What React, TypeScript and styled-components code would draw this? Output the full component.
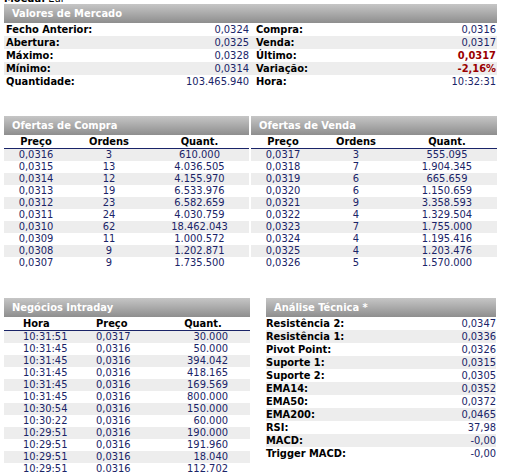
import React from 'react';
import styled, { createGlobalStyle } from 'styled-components';

const Global = createGlobalStyle`
  html, body { margin: 0; padding: 0; background: #fff; }
  body {
    font-family: "DejaVu Sans", Verdana, sans-serif;
    font-stretch: condensed;
    font-size: 11px;
    color: #000;
    overflow: hidden;
  }
`;

const NAVY = '#1a2468';
const ROWGRAY = '#ededed';

const Page = styled.div`
  width: 493px;
  margin: -7px 0 0 4px;
  display: flex;
  flex-direction: column;
`;

const Caption = styled.div`
  height: 12px;
  line-height: 12px;
  white-space: nowrap;
  b { font-weight: bold; }
`;

const Bar = styled.div<{ $mt?: number }>`
  height: 19px;
  line-height: 19px;
  margin-top: ${p => p.$mt ?? 0}px;
  padding-left: 8px;
  color: #fff;
  font-weight: bold;
  white-space: nowrap;
  background: linear-gradient(#c6c6c6, #8e8e8e);
`;

const KVGrid = styled.div`
  display: flex;
  flex-direction: column;
`;

const KVRow = styled.div<{ $alt: boolean }>`
  display: grid;
  grid-template-columns: 246px 247px;
  height: 13px;
  line-height: 13px;
  background: ${p => (p.$alt ? ROWGRAY : '#fff')};
`;

const KVHalf = styled.div<{ $pl: number }>`
  display: flex;
  justify-content: space-between;
  padding: 0 1px 0 ${p => p.$pl}px;
  white-space: nowrap;
`;

const Label = styled.span`
  font-weight: bold;
`;

const Value = styled.span<{ $red?: boolean }>`
  color: ${p => (p.$red ? '#9a0000' : NAVY)};
  font-weight: ${p => (p.$red ? 'bold' : 'normal')};
`;

const Pair = styled.div`
  display: grid;
  grid-template-columns: 245px 246px;
  column-gap: 2px;
  margin-top: 28px;
`;

const Panel = styled.div`
  display: flex;
  flex-direction: column;
`;

const OfferRow = styled.div<{ $head?: boolean; $alt?: boolean }>`
  display: grid;
  grid-template-columns: 64px 82px 1fr;
  height: ${p => (p.$head ? 13 : 12)}px;
  line-height: ${p => (p.$head ? 13 : 12)}px;
  font-weight: ${p => (p.$head ? 'bold' : 'normal')};
  color: ${p => (p.$head ? '#000' : NAVY)};
  background: ${p => (p.$alt ? ROWGRAY : '#fff')};
  border-bottom: ${p => (p.$head ? `1px solid ${NAVY}` : 'none')};
  text-align: center;
  white-space: nowrap;
`;

const Bottom = styled.div`
  display: grid;
  grid-template-columns: 246px 230px;
  column-gap: 16px;
  align-items: start;
  margin-top: 29px;
`;

const TradeRow = styled.div<{ $head?: boolean; $alt?: boolean }>`
  display: grid;
  grid-template-columns: 73px 82px 50px;
  padding-left: 19px;
  height: ${p => (p.$head ? 13 : 12)}px;
  line-height: ${p => (p.$head ? 13 : 12)}px;
  font-weight: ${p => (p.$head ? 'bold' : 'normal')};
  color: ${p => (p.$head ? '#000' : NAVY)};
  background: ${p => (p.$alt ? ROWGRAY : '#fff')};
  border-bottom: ${p => (p.$head ? `1px solid ${NAVY}` : 'none')};
  white-space: nowrap;
  & > span:nth-child(3) { text-align: ${p => (p.$head ? 'center' : 'right')}; }
`;

const TechRow = styled.div<{ $alt: boolean }>`
  display: flex;
  justify-content: space-between;
  height: 13px;
  line-height: 13px;
  background: ${p => (p.$alt ? ROWGRAY : '#fff')};
  white-space: nowrap;
`;

const market: [string, string, string, string, boolean][] = [
  ['Fecho Anterior:', '0,0324', 'Compra:', '0,0316', false],
  ['Abertura:', '0,0325', 'Venda:', '0,0317', false],
  ['Máximo:', '0,0328', 'Último:', '0,0317', true],
  ['Mínimo:', '0,0314', 'Variação:', '-2,16%', true],
  ['Quantidade:', '103.465.940', 'Hora:', '10:32:31', false],
];

const buy = [
  ['0,0316', '3', '610.000'],
  ['0,0315', '13', '4.036.505'],
  ['0,0314', '12', '4.155.970'],
  ['0,0313', '19', '6.533.976'],
  ['0,0312', '23', '6.582.659'],
  ['0,0311', '24', '4.030.759'],
  ['0,0310', '62', '18.462.043'],
  ['0,0309', '11', '1.000.572'],
  ['0,0308', '9', '1.202.871'],
  ['0,0307', '9', '1.735.500'],
];

const sell = [
  ['0,0317', '3', '555.095'],
  ['0,0318', '7', '1.904.345'],
  ['0,0319', '6', '665.659'],
  ['0,0320', '6', '1.150.659'],
  ['0,0321', '9', '3.358.593'],
  ['0,0322', '4', '1.329.504'],
  ['0,0323', '7', '1.755.000'],
  ['0,0324', '4', '1.195.416'],
  ['0,0325', '4', '1.203.476'],
  ['0,0326', '5', '1.570.000'],
];

const trades = [
  ['10:31:51', '0,0317', '30.000'],
  ['10:31:45', '0,0316', '50.000'],
  ['10:31:45', '0,0316', '394.042'],
  ['10:31:45', '0,0316', '418.165'],
  ['10:31:45', '0,0316', '169.569'],
  ['10:31:45', '0,0316', '800.000'],
  ['10:30:54', '0,0316', '150.000'],
  ['10:30:22', '0,0316', '60.000'],
  ['10:29:51', '0,0316', '190.000'],
  ['10:29:51', '0,0316', '191.960'],
  ['10:29:51', '0,0316', '18.040'],
  ['10:29:51', '0,0316', '112.702'],
];

const tech = [
  ['Resistência 2:', '0,0347'],
  ['Resistência 1:', '0,0336'],
  ['Pivot Point:', '0,0326'],
  ['Suporte 1:', '0,0315'],
  ['Suporte 2:', '0,0305'],
  ['EMA14:', '0,0352'],
  ['EMA50:', '0,0372'],
  ['EMA200:', '0,0465'],
  ['RSI:', '37,98'],
  ['MACD:', '-0,00'],
  ['Trigger MACD:', '-0,00'],
];

function OfferPanel({ title, rows }: { title: string; rows: string[][] }) {
  return (
    <Panel>
      <Bar>{title}</Bar>
      <OfferRow $head>
        <span>Preço</span>
        <span>Ordens</span>
        <span>Quant.</span>
      </OfferRow>
      {rows.map((r, i) => (
        <OfferRow key={i} $alt={i % 2 === 0}>
          <span>{r[0]}</span>
          <span>{r[1]}</span>
          <span>{r[2]}</span>
        </OfferRow>
      ))}
    </Panel>
  );
}

export default function App() {
  return (
    <>
      <Global />
      <Page>
        <Caption>
          <b>Moeda:</b> Eur
        </Caption>
        <Bar $mt={-1}>Valores de Mercado</Bar>
        <KVGrid>
          {market.map((m, i) => (
            <KVRow key={i} $alt={i % 2 === 1}>
              <KVHalf $pl={2}>
                <Label>{m[0]}</Label>
                <Value>{m[1]}</Value>
              </KVHalf>
              <KVHalf $pl={6}>
                <Label>{m[2]}</Label>
                <Value $red={m[4]}>{m[3]}</Value>
              </KVHalf>
            </KVRow>
          ))}
        </KVGrid>

        <Pair>
          <OfferPanel title="Ofertas de Compra" rows={buy} />
          <OfferPanel title="Ofertas de Venda" rows={sell} />
        </Pair>

        <Bottom>
          <Panel>
            <Bar>Negócios Intraday</Bar>
            <TradeRow $head>
              <span>Hora</span>
              <span>Preço</span>
              <span>Quant.</span>
            </TradeRow>
            {trades.map((t, i) => (
              <TradeRow key={i} $alt={i % 2 === 0}>
                <span>{t[0]}</span>
                <span>{t[1]}</span>
                <span>{t[2]}</span>
              </TradeRow>
            ))}
          </Panel>
          <Panel>
            <Bar>Análise Técnica *</Bar>
            {tech.map((t, i) => (
              <TechRow key={i} $alt={i % 2 === 1}>
                <Label>{t[0]}</Label>
                <Value>{t[1]}</Value>
              </TechRow>
            ))}
          </Panel>
        </Bottom>
      </Page>
    </>
  );
}
